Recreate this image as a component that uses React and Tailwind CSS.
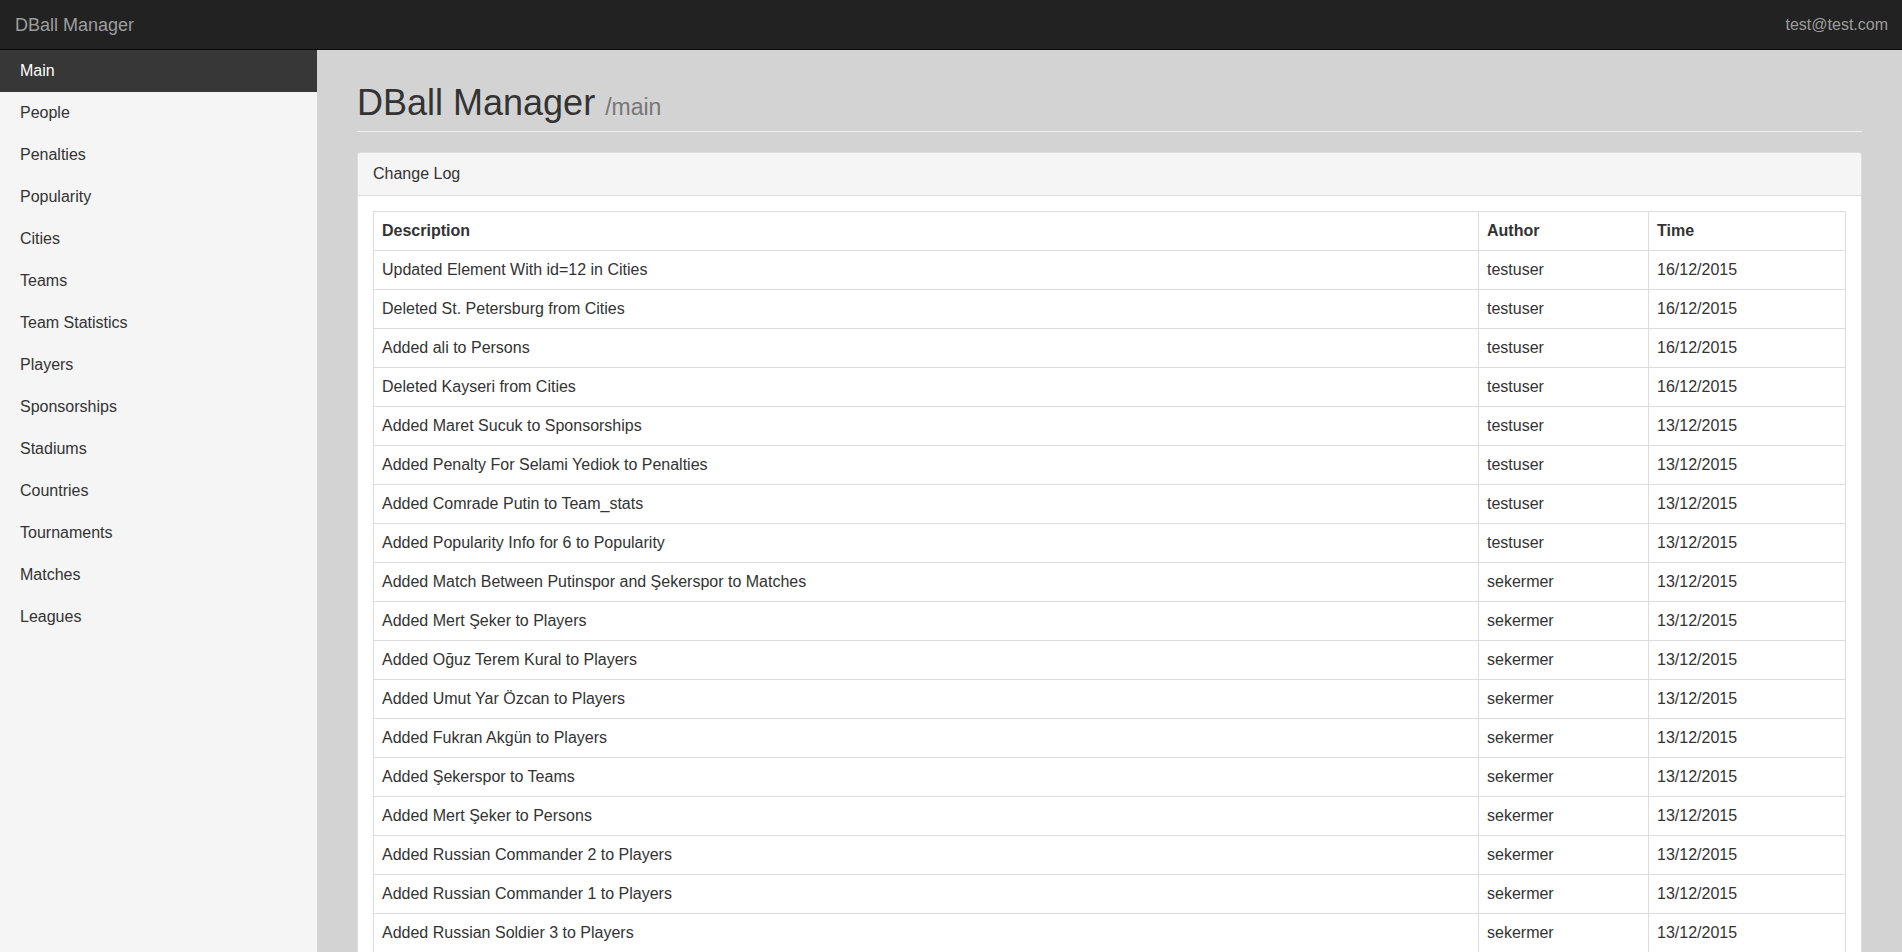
const navItems = [
    'Main',
    'People',
    'Penalties',
    'Popularity',
    'Cities',
    'Teams',
    'Team Statistics',
    'Players',
    'Sponsorships',
    'Stadiums',
    'Countries',
    'Tournaments',
    'Matches',
    'Leagues',
];

const changeLog = [
    ['Updated Element With id=12 in Cities', 'testuser', '16/12/2015'],
    ['Deleted St. Petersburg from Cities', 'testuser', '16/12/2015'],
    ['Added ali to Persons', 'testuser', '16/12/2015'],
    ['Deleted Kayseri from Cities', 'testuser', '16/12/2015'],
    ['Added Maret Sucuk to Sponsorships', 'testuser', '13/12/2015'],
    ['Added Penalty For Selami Yediok to Penalties', 'testuser', '13/12/2015'],
    ['Added Comrade Putin to Team_stats', 'testuser', '13/12/2015'],
    ['Added Popularity Info for 6 to Popularity', 'testuser', '13/12/2015'],
    ['Added Match Between Putinspor and Şekerspor to Matches', 'sekermer', '13/12/2015'],
    ['Added Mert Şeker to Players', 'sekermer', '13/12/2015'],
    ['Added Oğuz Terem Kural to Players', 'sekermer', '13/12/2015'],
    ['Added Umut Yar Özcan to Players', 'sekermer', '13/12/2015'],
    ['Added Fukran Akgün to Players', 'sekermer', '13/12/2015'],
    ['Added Şekerspor to Teams', 'sekermer', '13/12/2015'],
    ['Added Mert Şeker to Persons', 'sekermer', '13/12/2015'],
    ['Added Russian Commander 2 to Players', 'sekermer', '13/12/2015'],
    ['Added Russian Commander 1 to Players', 'sekermer', '13/12/2015'],
    ['Added Russian Soldier 3 to Players', 'sekermer', '13/12/2015'],
];

function Navbar() {
    return (
        <header className="h-[50px] shrink-0 flex items-center justify-between bg-[#222] border-b border-[#080808] text-[#9d9d9d]">
            <span className="pl-[15px] text-[18px] leading-[20px]">DBall Manager</span>
            <span className="pr-[14px] text-[16px] leading-[20px]">test@test.com</span>
        </header>
    );
}

function Sidebar({ active }) {
    return (
        <nav className="w-[317px] shrink-0 bg-[#f5f5f5]">
            <ul>
                {navItems.map((item) => (
                    <li key={item}>
                        <a
                            href="#"
                            className={`block px-[20px] py-[10px] text-[16px] leading-[22px] ${
                                item === active ? 'bg-[#373737] text-white' : 'text-[#333]'
                            }`}
                        >
                            {item}
                        </a>
                    </li>
                ))}
            </ul>
        </nav>
    );
}

function ChangeLogPanel() {
    return (
        <div className="mt-[20px] bg-white border border-[#ddd] rounded-[4px] shadow-[0_1px_1px_rgba(0,0,0,0.05)]">
            <div className="px-[15px] py-[10px] bg-[#f5f5f5] border-b border-[#ddd] rounded-t-[3px] text-[16px] leading-[22px]">
                Change Log
            </div>
            <div className="p-[15px]">
                <table className="w-full border-collapse border border-[#ddd] text-[16px] leading-[22px]">
                    <thead>
                        <tr>
                            <th className="border border-[#ddd] px-[8px] py-[8px] text-left font-bold">Description</th>
                            <th className="w-[170px] border border-[#ddd] px-[8px] py-[8px] text-left font-bold">Author</th>
                            <th className="w-[197px] border border-[#ddd] px-[8px] py-[8px] text-left font-bold">Time</th>
                        </tr>
                    </thead>
                    <tbody>
                        {changeLog.map(([desc, author, time], i) => (
                            <tr key={i}>
                                <td className="border border-[#ddd] px-[8px] py-[8px]">{desc}</td>
                                <td className="border border-[#ddd] px-[8px] py-[8px]">{author}</td>
                                <td className="border border-[#ddd] px-[8px] py-[8px]">{time}</td>
                            </tr>
                        ))}
                    </tbody>
                </table>
            </div>
        </div>
    );
}

export default function App() {
    return (
        <div className="h-screen flex flex-col overflow-hidden bg-[#d3d3d3] text-[#333] font-['Liberation_Sans',Arial,sans-serif]">
            <Navbar />
            <div className="flex flex-1 min-h-0">
                <Sidebar active="Main" />
                <main className="flex-1 min-w-0 px-[40px] pt-[33px] overflow-hidden">
                    <div className="pb-[4px] border-b border-[#eee]">
                        <h1 className="text-[36px] leading-[40px] font-normal">
                            DBall Manager <small className="text-[23px] text-[#777]">/main</small>
                        </h1>
                    </div>
                    <ChangeLogPanel />
                </main>
            </div>
        </div>
    );
}
